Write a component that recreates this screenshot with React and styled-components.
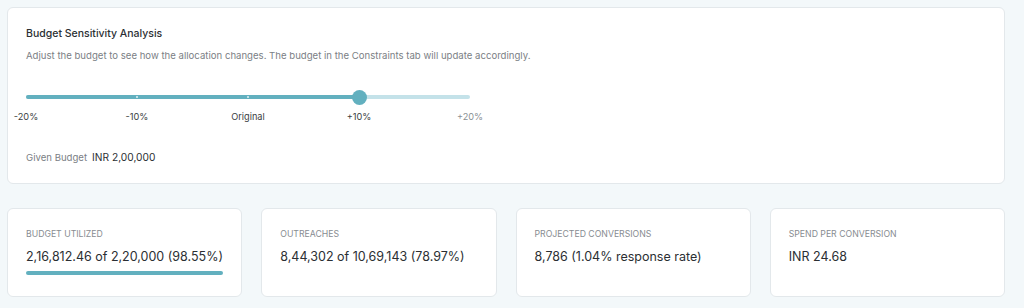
import React from "react";
import styled, { createGlobalStyle } from "styled-components";

const GlobalStyle = createGlobalStyle`
  body {
    margin: 0;
    background: #f3f8fa;
    font-family: Inter, "Noto Sans", sans-serif;
    color: #2b2f33;
  }
`;

const Page = styled.div`
  width: 998px;
  padding: 7px 0 0 7px;
  display: flex;
  flex-direction: column;
  gap: 24px;
`;

const Panel = styled.section`
  background: #fff;
  border: 1px solid #e3e8eb;
  border-radius: 6px;
  box-sizing: border-box;
  height: 177px;
  padding: 18px 18px 0;
`;

const Title = styled.h3`
  margin: 0;
  font-size: 10.5px;
  font-weight: 500;
  line-height: 16px;
  color: #2b2f33;
`;

const Description = styled.p`
  margin: 7px 0 0;
  font-size: 9.6px;
  line-height: 14px;
  color: #7b8085;
`;

const SliderWrap = styled.div`
  width: 444px;
  margin-top: 32px;
`;

const Track = styled.div`
  position: relative;
  height: 4px;
  border-radius: 2px;
  background: #c4e2e9;
`;

const Fill = styled.div`
  height: 100%;
  border-radius: 2px;
  background: #62b0bf;
`;

const TickDot = styled.span`
  position: absolute;
  top: 1px;
  width: 2px;
  height: 2px;
  margin-left: -1px;
  border-radius: 50%;
  background: #e4f3f6;
`;

const Thumb = styled.span`
  position: absolute;
  top: 50%;
  width: 15px;
  height: 15px;
  margin: -7.5px 0 0 -7.5px;
  border-radius: 50%;
  background: #62b0bf;
`;

const Labels = styled.div`
  display: flex;
  justify-content: space-between;
  margin: 12px -22px 0;
`;

const TickLabel = styled.span`
  width: 44px;
  text-align: center;
  font-size: 9.2px;
  line-height: 12px;
  color: ${(p) => (p.$muted ? "#8a8f94" : "#3a3e42")};
`;

const Given = styled.div`
  margin-top: 27px;
  display: flex;
  align-items: baseline;
  gap: 5px;
  line-height: 14px;
`;

const GivenLabel = styled.span`
  font-size: 9.6px;
  color: #7b8085;
`;

const GivenValue = styled.span`
  font-size: 10.2px;
  color: #2b2f33;
`;

const Stats = styled.div`
  display: grid;
  grid-template-columns: repeat(4, 1fr);
  gap: 19px;
`;

const StatCard = styled.div`
  background: #fff;
  border: 1px solid #e3e8eb;
  border-radius: 6px;
  box-sizing: border-box;
  height: 89px;
  padding: 19px 18px 0;
`;

const StatLabel = styled.div`
  font-size: 8.7px;
  line-height: 12px;
  text-transform: uppercase;
  color: #878c91;
`;

const StatValue = styled.div`
  margin-top: 9px;
  font-size: 12.5px;
  line-height: 16px;
  color: #2b2f33;
`;

const Bar = styled.div`
  margin-top: 6px;
  height: 4px;
  border-radius: 2px;
  background: #62b0bf;
  width: ${(p) => p.$pct}%;
`;

const ticks = ["-20%", "-10%", "Original", "+10%", "+20%"];
const value = 3; // index of selected tick

const stats = [
  { label: "Budget Utilized", value: "2,16,812.46 of 2,20,000 (98.55%)", bar: 100 },
  { label: "Outreaches", value: "8,44,302 of 10,69,143 (78.97%)" },
  { label: "Projected Conversions", value: "8,786 (1.04% response rate)" },
  { label: "Spend per Conversion", value: "INR 24.68" },
];

export default function App() {
  const pct = (value / (ticks.length - 1)) * 100;
  return (
    <>
      <GlobalStyle />
      <Page>
        <Panel>
          <Title>Budget Sensitivity Analysis</Title>
          <Description>
            Adjust the budget to see how the allocation changes. The budget in the Constraints tab will update accordingly.
          </Description>
          <SliderWrap>
            <Track>
              <Fill style={{ width: `${pct}%` }} />
              {ticks.slice(1, value).map((t, i) => (
                <TickDot key={t} style={{ left: `${((i + 1) / (ticks.length - 1)) * 100}%` }} />
              ))}
              <Thumb style={{ left: `${pct}%` }} />
            </Track>
            <Labels>
              {ticks.map((t, i) => (
                <TickLabel key={t} $muted={i > value}>{t}</TickLabel>
              ))}
            </Labels>
          </SliderWrap>
          <Given>
            <GivenLabel>Given Budget</GivenLabel>
            <GivenValue>INR 2,00,000</GivenValue>
          </Given>
        </Panel>
        <Stats>
          {stats.map((s) => (
            <StatCard key={s.label}>
              <StatLabel>{s.label}</StatLabel>
              <StatValue>{s.value}</StatValue>
              {s.bar && <Bar $pct={s.bar} />}
            </StatCard>
          ))}
        </Stats>
      </Page>
    </>
  );
}
